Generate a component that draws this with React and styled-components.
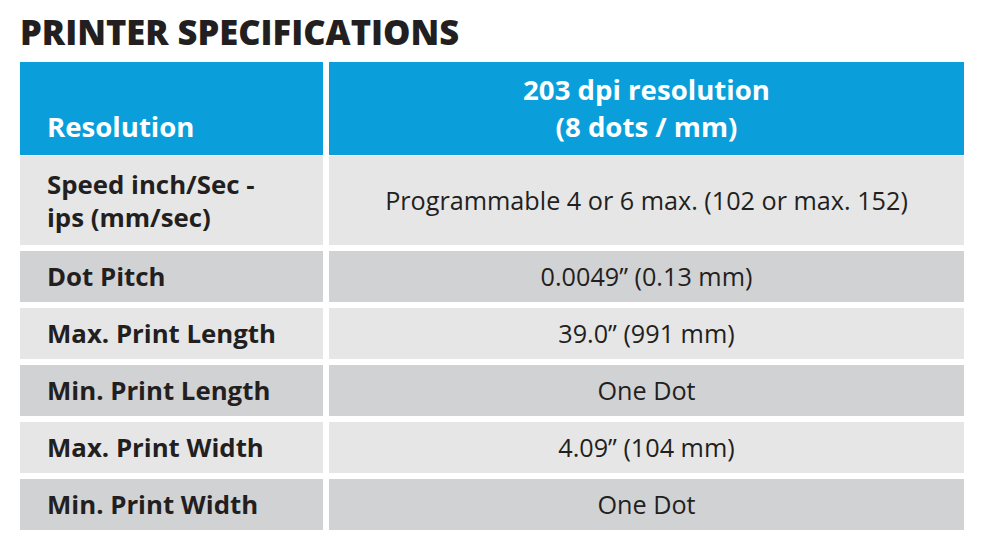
import React from 'react';
import styled, { createGlobalStyle } from 'styled-components';

const GlobalStyle = createGlobalStyle`
  body {
    margin: 0;
    background: #ffffff;
    font-family: "Open Sans", "Liberation Sans", sans-serif;
    color: #231f20;
  }
`;

const Page = styled.div`
  padding: 11px 0 0 20px;
  width: 944px;
`;

const Title = styled.h1`
  margin: 0 0 10px;
  font-size: 34.5px;
  line-height: 41px;
  font-weight: 800;
  color: #231f20;
`;

const Row = styled.div`
  display: grid;
  grid-template-columns: 303px 635px;
  column-gap: 6px;
  height: ${({ $h }) => $h}px;
`;

const HeadCell = styled.div`
  background: #0a9fdb;
  color: #ffffff;
  font-weight: 700;
  font-size: 27.6px;
  line-height: 37px;
  display: flex;
  flex-direction: column;
  justify-content: flex-end;
  padding: 0 27px 10px;
  text-align: ${({ $center }) => ($center ? 'center' : 'left')};
`;

const Body = styled.div`
  display: flex;
  flex-direction: column;
  gap: 6px;
  margin-top: 1px;
`;

const Cell = styled.div`
  background: ${({ $dark }) => ($dark ? '#d1d2d4' : '#e6e6e6')};
  display: flex;
  align-items: center;
  line-height: 33px;
`;

const Label = styled(Cell)`
  font-weight: 700;
  font-size: 25.8px;
  padding-left: 27px;
`;

const Value = styled(Cell)`
  justify-content: center;
  text-align: center;
  font-weight: 400;
  font-size: 25.2px;
`;

const rows = [
  { label: <>Speed inch/Sec -<br />ips (mm/sec)</>, value: 'Programmable 4 or 6 max. (102 or max. 152)', h: 89 },
  { label: 'Dot Pitch', value: '0.0049\u201d (0.13 mm)' },
  { label: 'Max. Print Length', value: '39.0\u201d (991 mm)' },
  { label: 'Min. Print Length', value: 'One Dot' },
  { label: 'Max. Print Width', value: '4.09\u201d (104 mm)' },
  { label: 'Min. Print Width', value: 'One Dot' },
];

export default function App() {
  return (
    <Page>
      <GlobalStyle />
      <Title>PRINTER SPECIFICATIONS</Title>
      <Row $h={93}>
        <HeadCell>Resolution</HeadCell>
        <HeadCell $center>
          <span>203 dpi resolution</span>
          <span>(8 dots / mm)</span>
        </HeadCell>
      </Row>
      <Body>
        {rows.map((r, i) => (
          <Row key={i} $h={r.h || 51}>
            <Label $dark={i % 2 === 1}>{r.label}</Label>
            <Value $dark={i % 2 === 1}>{r.value}</Value>
          </Row>
        ))}
      </Body>
    </Page>
  );
}
